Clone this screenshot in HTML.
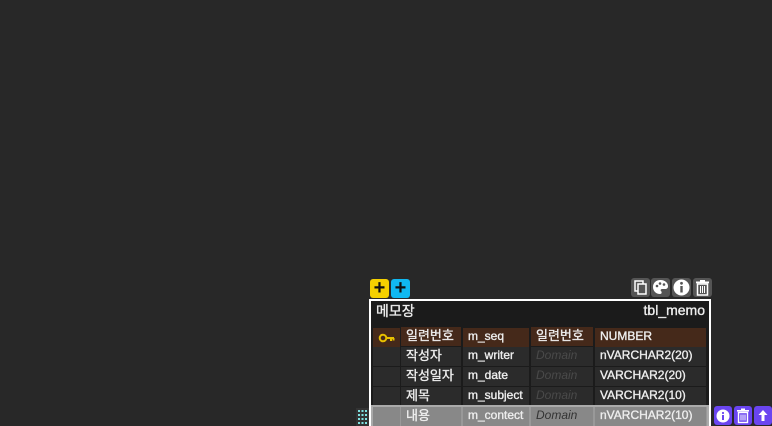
<!DOCTYPE html><html style="overflow:hidden;height:426px"><head><meta charset="utf-8"><style>
html,body{margin:0;width:772px;height:426px;overflow:hidden}
body{background:#282828;position:relative;font-family:"Liberation Sans","Noto Sans CJK KR",sans-serif;}
.a{position:absolute;box-sizing:border-box}
.c{position:absolute;box-sizing:border-box;height:19px;font-size:12px;line-height:17px;color:#eee;padding-left:5px;white-space:nowrap;overflow:hidden;-webkit-text-stroke:0.35px #eee}
.k{font-size:13px}
.d{color:#4a4a4a;font-style:italic;-webkit-text-stroke:0}
.btn{position:absolute;width:19px;height:19px;border-radius:3px;color:#111;font-size:20px;line-height:18px;text-align:center;font-weight:bold}
.ic{position:absolute;width:19px;height:19px;border-radius:3px;background:#555;top:278px}
.pu{position:absolute;width:18px;height:19px;border-radius:3px;background:#6a45f0;top:406px}
.t{-webkit-text-stroke:0.35px #eee}
</style></head><body>
<div class="btn" style="left:370px;top:279px;background:#f5d000">+</div>
<div class="btn" style="left:391px;top:279px;background:#10b8f0">+</div>
<div class="ic" style="left:631px"><svg width="19" height="19"><rect x="4" y="3" width="8" height="10" fill="none" stroke="#fff" stroke-width="1.5"/><rect x="7" y="6" width="8" height="10" fill="#555" stroke="#fff" stroke-width="1.5"/></svg></div>
<div class="ic" style="left:651px"><svg width="19" height="19"><path d="M9.5 2C5 2 2 5 2 9c0 4 3 7 7 7 2 0 2-2 1-3s0-2 1.5-2H14c2 0 3-1 3-3 0-3-3-6-7.5-6z" fill="#fff"/><circle cx="6" cy="8" r="1.3" fill="#555"/><circle cx="9" cy="5.5" r="1.3" fill="#555"/><circle cx="13" cy="6.5" r="1.3" fill="#555"/></svg></div>
<div class="ic" style="left:672px"><svg width="19" height="19"><circle cx="9.5" cy="9.5" r="8" fill="#fff"/><rect x="8.3" y="8" width="2.4" height="6.5" fill="#555"/><circle cx="9.5" cy="5.3" r="1.4" fill="#555"/></svg></div>
<div class="ic" style="left:693px"><svg width="19" height="19"><rect x="3" y="3.5" width="13" height="1.8" fill="#fff"/><rect x="7" y="2" width="5" height="2" fill="#fff"/><rect x="4.5" y="6" width="10" height="11" fill="none" stroke="#fff" stroke-width="1.5"/><path d="M7.5 8v7M9.5 8v7M11.5 8v7" stroke="#fff"/></svg></div>
<div class="a" style="left:369px;top:299px;width:342px;height:140px;border:2px solid #fff;background:#1b1b1b"></div>
<div class="a t" style="left:376px;top:301px;font-size:14px;color:#eee">메모장</div>
<div class="a t" style="left:600px;top:302px;width:105px;text-align:right;font-size:14px;color:#eee">tbl_memo</div>
<div class="c" style="left:373px;top:328px;width:27px;background:#45291a"><svg width="18" height="12" style="margin-top:4px"><circle cx="5" cy="6" r="3.3" fill="none" stroke="#e8c000" stroke-width="2"/><path d="M8 6h8M13 6v3M15.5 6v2.5" stroke="#e8c000" stroke-width="2"/></svg></div>
<div class="c k" style="left:401px;top:327px;width:60px;background:#45291a">일련번호</div>
<div class="c" style="left:463px;top:328px;width:66px;background:#45291a">m_seq</div>
<div class="c k" style="left:531px;top:327px;width:62px;background:#45291a">일련번호</div>
<div class="c" style="left:595px;top:328px;width:111px;background:#45291a">NUMBER</div>
<div class="c" style="left:373px;top:347px;width:27px;background:#2b2b2b"></div>
<div class="c k" style="left:401px;top:347px;width:60px;background:#2b2b2b">작성자</div>
<div class="c" style="left:463px;top:347px;width:66px;background:#2b2b2b">m_writer</div>
<div class="c d" style="left:531px;top:347px;width:62px;background:#2b2b2b">Domain</div>
<div class="c" style="left:595px;top:347px;width:111px;background:#2b2b2b">nVARCHAR2(20)</div>
<div class="c" style="left:373px;top:367px;width:27px;background:#2b2b2b"></div>
<div class="c k" style="left:401px;top:367px;width:60px;background:#2b2b2b">작성일자</div>
<div class="c" style="left:463px;top:367px;width:66px;background:#2b2b2b">m_date</div>
<div class="c d" style="left:531px;top:367px;width:62px;background:#2b2b2b">Domain</div>
<div class="c" style="left:595px;top:367px;width:111px;background:#2b2b2b">VARCHAR2(20)</div>
<div class="c" style="left:373px;top:387px;width:27px;background:#2b2b2b"></div>
<div class="c k" style="left:401px;top:387px;width:60px;background:#2b2b2b">제목</div>
<div class="c" style="left:463px;top:387px;width:66px;background:#2b2b2b">m_subject</div>
<div class="c d" style="left:531px;top:387px;width:62px;background:#2b2b2b">Domain</div>
<div class="c" style="left:595px;top:387px;width:111px;background:#2b2b2b">VARCHAR2(10)</div>
<div class="a" style="left:371px;top:405px;width:338px;height:25px;border:2px solid #aaa;background:#999"></div>
<div class="c" style="left:373px;top:407px;width:27px;background:#888"></div>
<div class="c k" style="left:401px;top:407px;width:60px;background:#888">내용</div>
<div class="c" style="left:463px;top:407px;width:66px;background:#888">m_contect</div>
<div class="c d" style="left:531px;top:407px;width:62px;background:#888;color:#333">Domain</div>
<div class="c" style="left:595px;top:407px;width:111px;background:#888">nVARCHAR2(10)</div>
<div class="a" style="left:356px;top:408px;width:13px;height:18px;background:#333"><svg width="13" height="18"><g fill="#7fe0e0"><rect x="2" y="2" width="2" height="2"/><rect x="5.5" y="2" width="2" height="2"/><rect x="9" y="2" width="2" height="2"/><rect x="2" y="6" width="2" height="2"/><rect x="5.5" y="6" width="2" height="2"/><rect x="9" y="6" width="2" height="2"/><rect x="2" y="10" width="2" height="2"/><rect x="5.5" y="10" width="2" height="2"/><rect x="9" y="10" width="2" height="2"/><rect x="2" y="14" width="2" height="2"/><rect x="5.5" y="14" width="2" height="2"/><rect x="9" y="14" width="2" height="2"/></g></svg></div>
<div class="pu" style="left:714px"><svg width="18" height="19"><circle cx="9" cy="10" r="6.5" fill="#fff"/><rect x="8" y="9" width="2" height="5" fill="#6a45f0"/><circle cx="9" cy="7" r="1.1" fill="#6a45f0"/></svg></div>
<div class="pu" style="left:734px"><svg width="18" height="19"><rect x="3" y="4" width="12" height="1.6" fill="#fff"/><rect x="7" y="2.5" width="4" height="2" fill="#fff"/><rect x="4.5" y="6.5" width="9" height="10" fill="none" stroke="#fff" stroke-width="1.4"/><path d="M7 8.5v6M9 8.5v6M11 8.5v6" stroke="#fff"/></svg></div>
<div class="pu" style="left:754px"><svg width="18" height="19"><path d="M9 4l-4.5 5h3v6h3V9h3z" fill="#fff"/></svg></div>
</body></html>
